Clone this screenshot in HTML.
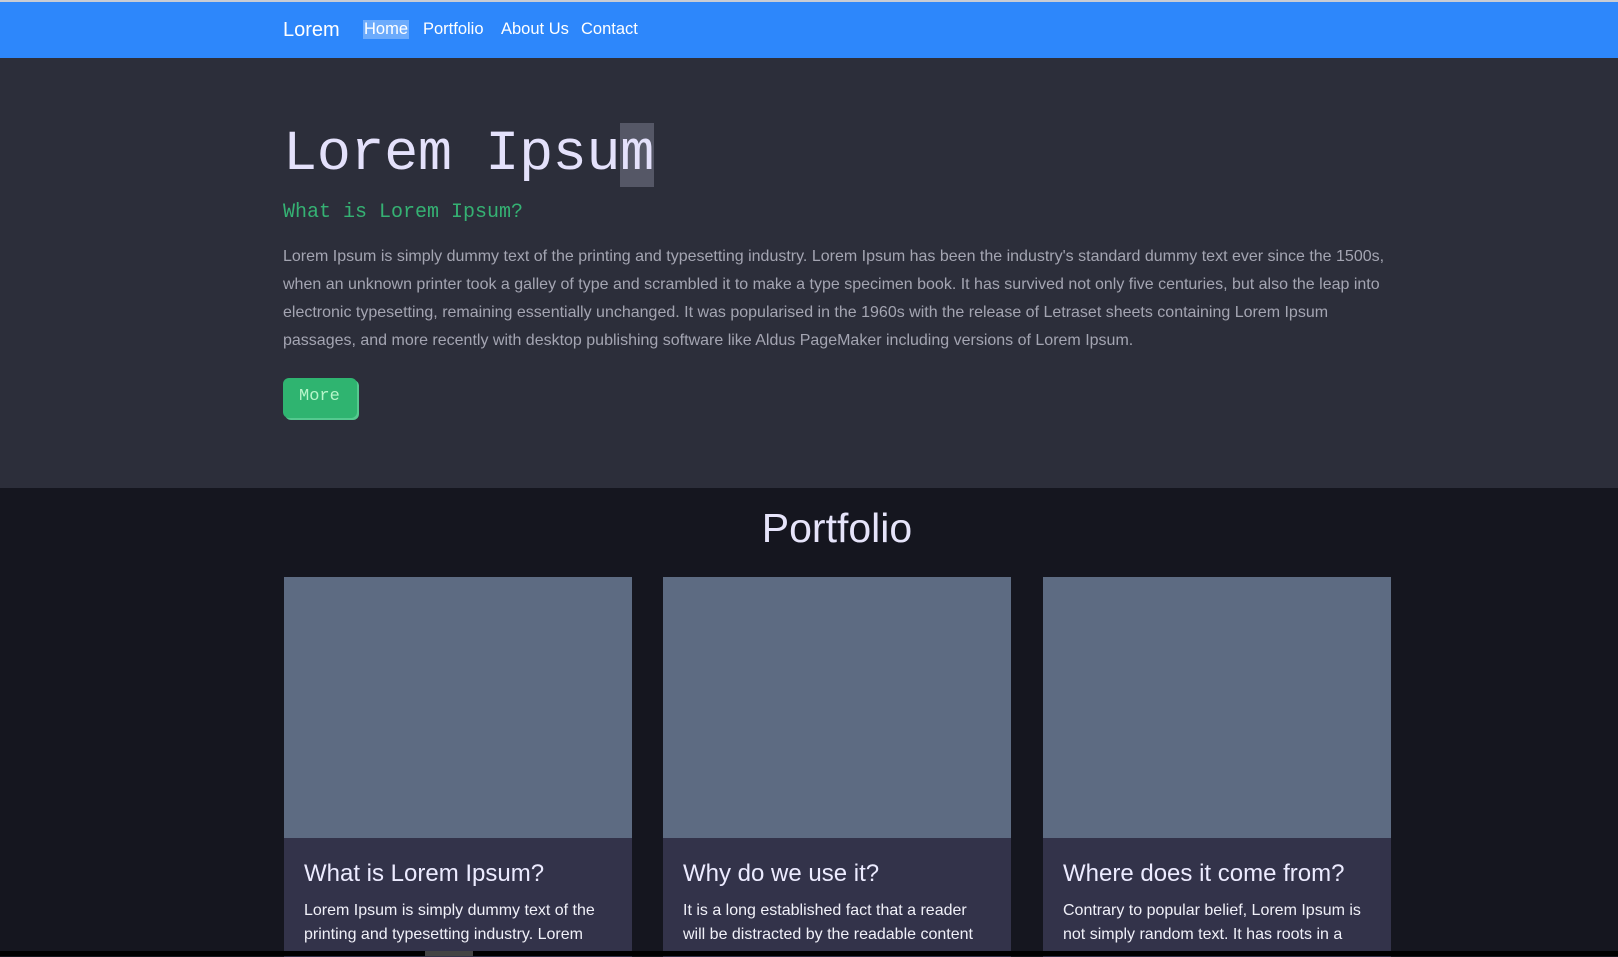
<!DOCTYPE html>
<html><head><meta charset="utf-8"><style>
*{margin:0;padding:0;box-sizing:border-box}
html,body{width:1618px;height:956px;overflow:hidden;background:#15161f;font-family:"Liberation Sans",sans-serif}
.top{position:absolute;left:0;top:0;width:1618px;height:2px;background:#c8ccd4}
nav{position:absolute;top:2px;left:0;width:1618px;height:56px;background:#2d87fb;color:#fff}
nav .brand{position:absolute;left:283px;top:17px;font-size:20px}
nav a{position:absolute;top:18px;font-size:16.5px;color:#fff}
nav .home{background:rgba(255,255,255,.3);padding:0 1px}
.hero{position:absolute;top:58px;left:0;width:1618px;height:430px;background:#2c2e3a}
h1{position:absolute;left:283px;top:62px;font-family:"Liberation Mono",monospace;font-weight:normal;font-size:57px;color:#e4e1fb;letter-spacing:-0.5px;line-height:70px}
h1 span{background:#555766}
h2{position:absolute;left:283px;top:143px;font-family:"Liberation Mono",monospace;font-weight:normal;font-size:20px;color:#35b173}
p.lead{position:absolute;left:283px;top:185px;width:1120px;font-size:16px;line-height:28px;color:#a4a5b2}
.btn{position:absolute;left:283px;top:320px;width:74px;height:40px;background:#2fb470;border-radius:6px;box-shadow:2px 2px 0 #55c98f;color:#b6f5c9;font-family:"Liberation Mono",monospace;font-size:17px;line-height:38px;padding-left:16px}
.pt{position:absolute;top:505px;left:283px;width:1108px;text-align:center;font-size:41px;color:#e6e4fa}
.card{position:absolute;top:577px;width:348px;height:380px;background:#33334a}
.card .img{height:261px;background:#5d6b82}
.card h3{font-weight:normal;font-size:24px;color:#ecebff;margin:22px 0 0 20px}
.card p{font-size:16px;line-height:24px;color:#f0f0f8;margin:11px 20px 0 20px}
.bar{position:absolute;left:0;top:951px;width:1618px;height:5px;background:#000}
.thumb{position:absolute;left:425px;top:951px;width:48px;height:5px;background:#444}
</style></head><body>
<div class="top"></div>
<nav><span class="brand">Lorem</span><a class="home" style="left:363px">Home</a><a style="left:423px">Portfolio</a><a style="left:501px">About Us</a><a style="left:581px">Contact</a></nav>
<div class="hero">
<h1>Lorem Ipsu<span>m</span></h1>
<h2>What is Lorem Ipsum?</h2>
<p class="lead">Lorem Ipsum is simply dummy text of the printing and typesetting industry. Lorem Ipsum has been the industry's standard dummy text ever since the 1500s, when an unknown printer took a galley of type and scrambled it to make a type specimen book. It has survived not only five centuries, but also the leap into electronic typesetting, remaining essentially unchanged. It was popularised in the 1960s with the release of Letraset sheets containing Lorem Ipsum passages, and more recently with desktop publishing software like Aldus PageMaker including versions of Lorem Ipsum.</p>
<div class="btn">More</div>
</div>
<div class="pt">Portfolio</div>
<div class="card" style="left:284px"><div class="img"></div><h3>What is Lorem Ipsum?</h3><p>Lorem Ipsum is simply dummy text of the printing and typesetting industry. Lorem</p></div>
<div class="card" style="left:663px"><div class="img"></div><h3>Why do we use it?</h3><p>It is a long established fact that a reader will be distracted by the readable content</p></div>
<div class="card" style="left:1043px"><div class="img"></div><h3>Where does it come from?</h3><p>Contrary to popular belief, Lorem Ipsum is not simply random text. It has roots in a</p></div>
<div class="bar"></div><div class="thumb"></div>
</body></html>
